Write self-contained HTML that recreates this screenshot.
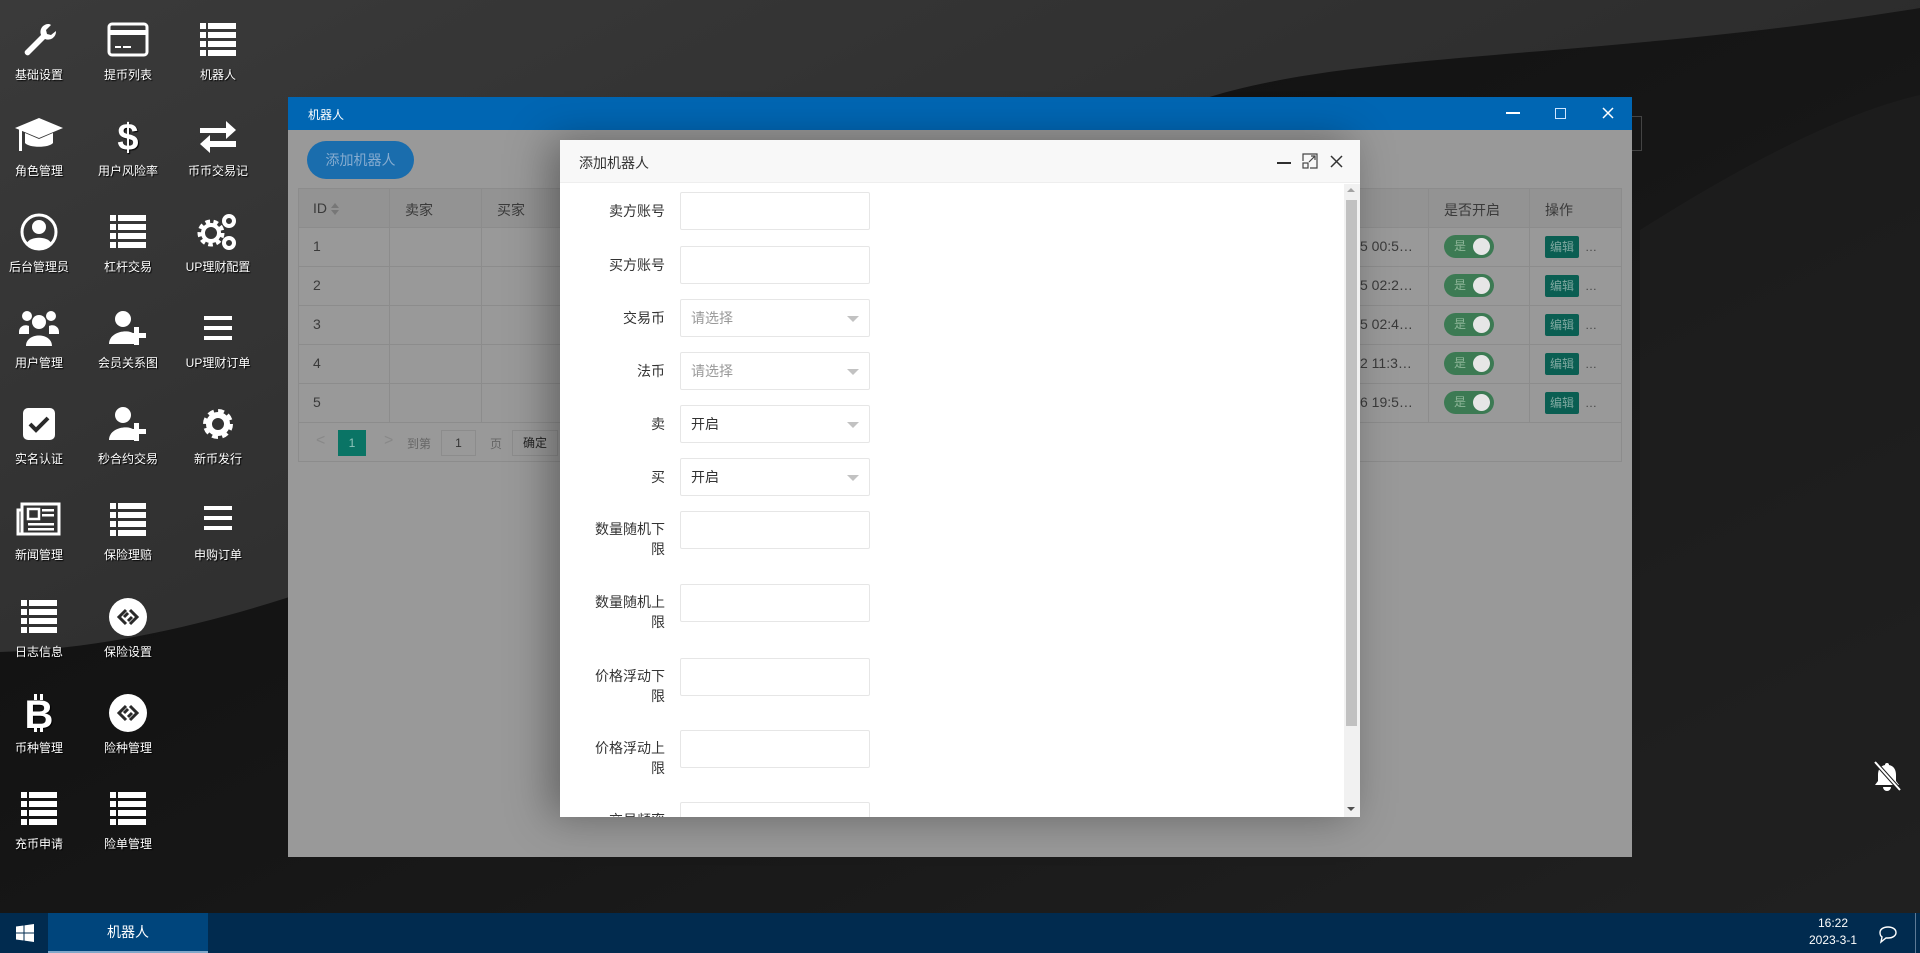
<!DOCTYPE html>
<html><head><meta charset="utf-8">
<style>
*{margin:0;padding:0;box-sizing:border-box}
html,body{width:1920px;height:953px;overflow:hidden}
body{position:relative;font-family:"Liberation Sans","Noto Sans CJK SC",sans-serif;background:#1c1c1c}
.abs{position:absolute}
.di{position:absolute;width:90px;height:70px;text-align:center;color:#fff;font-size:12px;text-shadow:1px 1px 1px #000}
.di svg{display:block;margin:0 auto}
.di span{position:absolute;left:-10px;right:-10px;white-space:nowrap;top:46px}
.lbl{position:absolute;left:593px;width:72px;text-align:right;font-size:14px;color:#333;line-height:20px}
.inp{position:absolute;left:680px;width:190px;height:38px;border:1px solid #e6e6e6;border-radius:2px;background:#fff;font-size:14px;line-height:36px;padding-left:10px;color:#333}
.inp.ph{color:#999}
.arr{position:absolute;right:10px;top:16px;width:0;height:0;border-left:6px solid transparent;border-right:6px solid transparent;border-top:6px solid #c2c2c2}
.cell{position:absolute;font-size:14px;color:#3a3a3a}
.tg{position:absolute;left:1444px;width:50px;height:23px;border-radius:12px;background:#3c7a53;color:#8fb79a;font-size:12px;line-height:23px;padding-left:10px}
.tg i{position:absolute;right:4px;top:3px;width:17px;height:17px;border-radius:50%;background:#e6e6e6}
.ed{position:absolute;left:1545px;width:34px;height:22px;background:#0a5e52;color:#7fa8a0;font-size:12px;line-height:22px;text-align:center;border-radius:2px}
.dots{position:absolute;left:1585px;font-size:12px;color:#444}
</style></head><body>
<svg class="abs" style="left:0;top:0" width="1920" height="953">
<defs>
<linearGradient id="g1" x1="0" y1="0" x2="1" y2="1"><stop offset="0" stop-color="#3a3a3a"/><stop offset="0.6" stop-color="#2a2a2a"/><stop offset="1" stop-color="#242424"/></linearGradient>
<linearGradient id="g2" x1="0" y1="0" x2="1" y2="1"><stop offset="0" stop-color="#0c0c0c"/><stop offset="0.5" stop-color="#161616"/><stop offset="1" stop-color="#222"/></linearGradient>
</defs>
<rect width="1920" height="953" fill="url(#g1)"/>
<path d="M0 652 C400 640 900 300 1200 100 C1350 50 1600 60 1920 8 L1920 953 L0 953Z" fill="url(#g2)"/>
<path d="M1640 230 C1750 160 1850 110 1920 95 L1920 953 L1640 953Z" fill="#1f1f1f" opacity="0.6"/>
</svg>

<!-- desktop icons -->
<div class="di" style="left:-6px;top:20px"><svg width="40" height="40" viewBox="0 0 40 40"><path d="M30 4a8 8 0 0 0-8 11L6 31a3 3 0 0 0 4 4l16-16a8 8 0 0 0 11-8l-5 4-4-1-1-4 5-5a8 8 0 0 0-2-1z" fill="#fff"/></svg><span>基础设置</span></div>
<div class="di" style="left:83px;top:20px"><svg width="42" height="40" viewBox="0 0 42 40"><rect x="2" y="4" width="38" height="31" rx="3" fill="none" stroke="#fff" stroke-width="3"/><rect x="2" y="10" width="38" height="5" fill="#fff"/><rect x="8" y="26" width="6" height="2" fill="#fff"/><rect x="16" y="26" width="8" height="2" fill="#fff"/></svg><span>提币列表</span></div>
<div class="di" style="left:173px;top:20px"><svg width="40" height="40" viewBox="0 0 40 40"><g fill="#fff"><rect x="2" y="3" width="6" height="6"/><rect x="10" y="3" width="28" height="6"/><rect x="2" y="12" width="6" height="6"/><rect x="10" y="12" width="28" height="6"/><rect x="2" y="21" width="6" height="6"/><rect x="10" y="21" width="28" height="6"/><rect x="2" y="30" width="6" height="6"/><rect x="10" y="30" width="28" height="6"/></g></svg><span>机器人</span></div>

<div class="di" style="left:-6px;top:116px"><svg width="50" height="40" viewBox="0 0 50 40"><path d="M25 2 L49 12 L25 22 L1 12Z" fill="#fff"/><path d="M11 17v10c4 5 24 5 28 0V17l-14 6z" fill="#fff"/><rect x="5" y="13" width="3" height="22" fill="#fff"/></svg><span>角色管理</span></div>
<div class="di" style="left:83px;top:116px"><svg width="40" height="40" viewBox="0 0 40 40"><text x="20" y="34" text-anchor="middle" font-size="38" font-weight="bold" fill="#fff" font-family="Liberation Sans">$</text></svg><span>用户风险率</span></div>
<div class="di" style="left:173px;top:116px"><svg width="40" height="40" viewBox="0 0 40 40"><path d="M2 12h26V5l10 9-10 9v-6H2z M38 25H12v-6L2 28l10 9v-6h26z" fill="#fff"/></svg><span>币币交易记</span></div>

<div class="di" style="left:-6px;top:212px"><svg width="40" height="40" viewBox="0 0 40 40"><circle cx="20" cy="20" r="17" fill="none" stroke="#fff" stroke-width="3"/><circle cx="20" cy="15" r="7" fill="#fff"/><path d="M8 31c3-7 21-7 24 0a17 17 0 0 1-24 0z" fill="#fff"/></svg><span>后台管理员</span></div>
<div class="di" style="left:83px;top:212px"><svg width="40" height="40" viewBox="0 0 40 40"><g fill="#fff"><rect x="2" y="3" width="6" height="6"/><rect x="10" y="3" width="28" height="6"/><rect x="2" y="12" width="6" height="6"/><rect x="10" y="12" width="28" height="6"/><rect x="2" y="21" width="6" height="6"/><rect x="10" y="21" width="28" height="6"/><rect x="2" y="30" width="6" height="6"/><rect x="10" y="30" width="28" height="6"/></g></svg><span>杠杆交易</span></div>
<div class="di" style="left:173px;top:212px"><svg width="44" height="40" viewBox="0 0 44 40"><circle cx="15" cy="21" r="10" fill="none" stroke="#fff" stroke-width="7" stroke-dasharray="4 3"/><circle cx="15" cy="21" r="8" fill="none" stroke="#fff" stroke-width="4"/><circle cx="33" cy="9" r="5" fill="none" stroke="#fff" stroke-width="4"/><circle cx="33" cy="31" r="5" fill="none" stroke="#fff" stroke-width="4"/></svg><span>UP理财配置</span></div>

<div class="di" style="left:-6px;top:308px"><svg width="44" height="40" viewBox="0 0 44 40"><g fill="#fff"><circle cx="10" cy="8" r="5"/><circle cx="34" cy="8" r="5"/><circle cx="22" cy="14" r="7"/><path d="M2 24c0-6 6-8 10-6v8H2z M42 24c0-6-6-8-10-6v8h10z M9 38c0-14 26-14 26 0z"/></g></svg><span>用户管理</span></div>
<div class="di" style="left:83px;top:308px"><svg width="44" height="40" viewBox="0 0 44 40"><g fill="#fff"><circle cx="17" cy="11" r="8"/><path d="M3 36c0-14 24-16 26-8v8z"/><rect x="28" y="19" width="5" height="18"/><rect x="21" y="25" width="19" height="5"/></g></svg><span>会员关系图</span></div>
<div class="di" style="left:173px;top:308px"><svg width="40" height="40" viewBox="0 0 40 40"><g fill="#fff"><rect x="6" y="8" width="28" height="4"/><rect x="6" y="18" width="28" height="4"/><rect x="6" y="28" width="28" height="4"/></g></svg><span>UP理财订单</span></div>

<div class="di" style="left:-6px;top:404px"><svg width="40" height="40" viewBox="0 0 40 40"><rect x="4" y="4" width="32" height="32" rx="5" fill="#fff"/><path d="M11 20l6 6 12-12" fill="none" stroke="#2a2a2a" stroke-width="4"/></svg><span>实名认证</span></div>
<div class="di" style="left:83px;top:404px"><svg width="44" height="40" viewBox="0 0 44 40"><g fill="#fff"><circle cx="17" cy="11" r="8"/><path d="M3 36c0-14 24-16 26-8v8z"/><rect x="28" y="19" width="5" height="18"/><rect x="21" y="25" width="19" height="5"/></g></svg><span>秒合约交易</span></div>
<div class="di" style="left:173px;top:404px"><svg width="40" height="40" viewBox="0 0 40 40"><circle cx="20" cy="20" r="11" fill="none" stroke="#fff" stroke-width="8" stroke-dasharray="5 3.6"/><circle cx="20" cy="20" r="9" fill="none" stroke="#fff" stroke-width="6"/></svg><span>新币发行</span></div>

<div class="di" style="left:-6px;top:500px"><svg width="46" height="40" viewBox="0 0 46 40"><rect x="6" y="4" width="37" height="30" fill="none" stroke="#fff" stroke-width="3"/><path d="M6 10H2v24h4" fill="none" stroke="#fff" stroke-width="3"/><rect x="12" y="9" width="11" height="10" fill="none" stroke="#fff" stroke-width="2.5"/><g fill="#fff"><rect x="26" y="9" width="12" height="2.5"/><rect x="26" y="14" width="12" height="2.5"/><rect x="12" y="23" width="26" height="2.5"/><rect x="12" y="28" width="26" height="2.5"/></g></svg><span>新闻管理</span></div>
<div class="di" style="left:83px;top:500px"><svg width="40" height="40" viewBox="0 0 40 40"><g fill="#fff"><rect x="2" y="3" width="6" height="6"/><rect x="10" y="3" width="28" height="6"/><rect x="2" y="12" width="6" height="6"/><rect x="10" y="12" width="28" height="6"/><rect x="2" y="21" width="6" height="6"/><rect x="10" y="21" width="28" height="6"/><rect x="2" y="30" width="6" height="6"/><rect x="10" y="30" width="28" height="6"/></g></svg><span>保险理赔</span></div>
<div class="di" style="left:173px;top:500px"><svg width="40" height="40" viewBox="0 0 40 40"><g fill="#fff"><rect x="6" y="6" width="28" height="4"/><rect x="6" y="16" width="28" height="4"/><rect x="6" y="26" width="28" height="4"/></g></svg><span>申购订单</span></div>

<div class="di" style="left:-6px;top:597px"><svg width="40" height="40" viewBox="0 0 40 40"><g fill="#fff"><rect x="2" y="3" width="6" height="6"/><rect x="10" y="3" width="28" height="6"/><rect x="2" y="12" width="6" height="6"/><rect x="10" y="12" width="28" height="6"/><rect x="2" y="21" width="6" height="6"/><rect x="10" y="21" width="28" height="6"/><rect x="2" y="30" width="6" height="6"/><rect x="10" y="30" width="28" height="6"/></g></svg><span>日志信息</span></div>
<div class="di" style="left:83px;top:597px"><svg width="40" height="40" viewBox="0 0 40 40"><circle cx="20" cy="20" r="19" fill="#fff"/><path d="M18 13l-7 7 7 7 M22 13l7 7-7 7 M16 20l4-4 M24 20l-4 4" fill="none" stroke="#2a2a2a" stroke-width="3"/></svg><span>保险设置</span></div>

<div class="di" style="left:-6px;top:693px"><svg width="40" height="40" viewBox="0 0 40 40"><text x="20" y="35" text-anchor="middle" font-size="40" font-weight="bold" fill="#fff" font-family="Liberation Sans">B</text><g fill="#fff"><rect x="15" y="1" width="3" height="6"/><rect x="21" y="1" width="3" height="6"/><rect x="15" y="33" width="3" height="6"/><rect x="21" y="33" width="3" height="6"/></g></svg><span>币种管理</span></div>
<div class="di" style="left:83px;top:693px"><svg width="40" height="40" viewBox="0 0 40 40"><circle cx="20" cy="20" r="19" fill="#fff"/><path d="M18 13l-7 7 7 7 M22 13l7 7-7 7 M16 20l4-4 M24 20l-4 4" fill="none" stroke="#2a2a2a" stroke-width="3"/></svg><span>险种管理</span></div>

<div class="di" style="left:-6px;top:789px"><svg width="40" height="40" viewBox="0 0 40 40"><g fill="#fff"><rect x="2" y="3" width="6" height="6"/><rect x="10" y="3" width="28" height="6"/><rect x="2" y="12" width="6" height="6"/><rect x="10" y="12" width="28" height="6"/><rect x="2" y="21" width="6" height="6"/><rect x="10" y="21" width="28" height="6"/><rect x="2" y="30" width="6" height="6"/><rect x="10" y="30" width="28" height="6"/></g></svg><span>充币申请</span></div>
<div class="di" style="left:83px;top:789px"><svg width="40" height="40" viewBox="0 0 40 40"><g fill="#fff"><rect x="2" y="3" width="6" height="6"/><rect x="10" y="3" width="28" height="6"/><rect x="2" y="12" width="6" height="6"/><rect x="10" y="12" width="28" height="6"/><rect x="2" y="21" width="6" height="6"/><rect x="10" y="21" width="28" height="6"/><rect x="2" y="30" width="6" height="6"/><rect x="10" y="30" width="28" height="6"/></g></svg><span>险单管理</span></div>

<!-- bell slash -->
<svg class="abs" style="left:1872px;top:760px" width="30" height="32" viewBox="0 0 30 32"><path d="M15 3a2 2 0 0 1 2 2c5 1 7 5 7 10v6l3 4H3l3-4v-6c0-5 2-9 7-10a2 2 0 0 1 2-2z M11 27a4 4 0 0 0 8 0z" fill="#fff"/><path d="M3 2L28 30" stroke="#1e1e1e" stroke-width="4"/><path d="M3 2L28 30" stroke="#fff" stroke-width="2"/></svg>

<div class="abs" style="left:1630px;top:116px;width:12px;height:35px;border:1px solid #444;border-left:none"></div>

<!-- window -->
<div class="abs" style="left:288px;top:97px;width:1344px;height:760px;background:#999;overflow:hidden">
  <div class="abs" style="left:0;top:0;width:1344px;height:33px;background:#0066b3"></div>
  <div class="abs" style="left:20px;top:9px;color:#fff;font-size:12px">机器人</div>
  <div class="abs" style="left:1218px;top:15px;width:14px;height:2px;background:#fff"></div>
  <div class="abs" style="left:1267px;top:11px;width:11px;height:11px;border:1.5px solid #cfe6ff"></div>
  <svg class="abs" style="left:1314px;top:10px" width="12" height="12"><path d="M1 1L11 11M11 1L1 11" stroke="#fff" stroke-width="1.5"/></svg>
</div>
<div class="abs" style="left:307px;top:141px;width:107px;height:38px;border-radius:19px;background:#1a6dad;color:#86acd0;font-size:14px;line-height:38px;text-align:center">添加机器人</div>
<!-- table -->
<div class="abs" style="left:298px;top:188px;width:1324px;height:274px;border:1px solid #8c8c8c"></div>
<div class="abs" style="left:299px;top:189px;width:1322px;height:38px;background:#939393"></div>
<div class="abs" style="left:298px;top:227px;width:1324px;height:1px;background:#8c8c8c"></div>
<div class="abs" style="left:298px;top:266px;width:1324px;height:1px;background:#8c8c8c"></div>
<div class="abs" style="left:298px;top:305px;width:1324px;height:1px;background:#8c8c8c"></div>
<div class="abs" style="left:298px;top:344px;width:1324px;height:1px;background:#8c8c8c"></div>
<div class="abs" style="left:298px;top:383px;width:1324px;height:1px;background:#8c8c8c"></div>
<div class="abs" style="left:298px;top:422px;width:1324px;height:1px;background:#8c8c8c"></div>
<div class="abs" style="left:389px;top:188px;width:1px;height:234px;background:#8c8c8c"></div>
<div class="abs" style="left:481px;top:188px;width:1px;height:234px;background:#8c8c8c"></div>
<div class="abs" style="left:1428px;top:188px;width:1px;height:234px;background:#8c8c8c"></div>
<div class="abs" style="left:1529px;top:188px;width:1px;height:234px;background:#8c8c8c"></div>
<div class="cell" style="left:313px;top:200px">ID</div>
<div class="abs" style="left:331px;top:203px;width:0;height:0;border-left:4px solid transparent;border-right:4px solid transparent;border-bottom:5px solid #777"></div>
<div class="abs" style="left:331px;top:210px;width:0;height:0;border-left:4px solid transparent;border-right:4px solid transparent;border-top:5px solid #777"></div>
<div class="cell" style="left:405px;top:200px">卖家</div>
<div class="cell" style="left:497px;top:200px">买家</div>
<div class="cell" style="left:1444px;top:200px">是否开启</div>
<div class="cell" style="left:1545px;top:200px">操作</div>
<div class="cell" style="left:313px;top:238px">1</div>
<div class="cell" style="left:313px;top:277px">2</div>
<div class="cell" style="left:313px;top:316px">3</div>
<div class="cell" style="left:313px;top:355px">4</div>
<div class="cell" style="left:313px;top:394px">5</div>
<div class="cell" style="left:1360px;top:238px">5 00:5…</div>
<div class="cell" style="left:1360px;top:277px">5 02:2…</div>
<div class="cell" style="left:1360px;top:316px">5 02:4…</div>
<div class="cell" style="left:1360px;top:355px">2 11:3…</div>
<div class="cell" style="left:1360px;top:394px">6 19:5…</div>
<div class="tg" style="top:235px">是<i></i></div>
<div class="tg" style="top:274px">是<i></i></div>
<div class="tg" style="top:313px">是<i></i></div>
<div class="tg" style="top:352px">是<i></i></div>
<div class="tg" style="top:391px">是<i></i></div>
<div class="ed" style="top:236px">编辑</div><div class="dots" style="top:240px">…</div>
<div class="ed" style="top:275px">编辑</div><div class="dots" style="top:279px">…</div>
<div class="ed" style="top:314px">编辑</div><div class="dots" style="top:318px">…</div>
<div class="ed" style="top:353px">编辑</div><div class="dots" style="top:357px">…</div>
<div class="ed" style="top:392px">编辑</div><div class="dots" style="top:396px">…</div>
<div class="cell" style="left:316px;top:432px;color:#888;font-size:16px">&lt;</div>
<div class="abs" style="left:338px;top:430px;width:28px;height:26px;background:#0a7465;color:#8fc4bb;font-size:12px;line-height:26px;text-align:center">1</div>
<div class="cell" style="left:384px;top:432px;color:#888;font-size:16px">&gt;</div>
<div class="cell" style="left:407px;top:435px;font-size:12px;color:#666">到第</div>
<div class="abs" style="left:441px;top:430px;width:35px;height:26px;border:1px solid #8c8c8c;font-size:12px;line-height:24px;text-align:center;color:#333">1</div>
<div class="cell" style="left:490px;top:435px;font-size:12px;color:#666">页</div>
<div class="abs" style="left:512px;top:430px;width:46px;height:26px;border:1px solid #8c8c8c;font-size:12px;line-height:24px;text-align:center;color:#222">确定</div>

<!-- modal -->
<div class="abs" style="left:560px;top:140px;width:800px;height:677px;background:#fff;box-shadow:-10px 0 40px rgba(0,0,0,.35);overflow:hidden">
  <div class="abs" style="left:0;top:0;width:800px;height:43px;background:#f8f8f8;border-bottom:1px solid #eee"></div>
  <div class="abs" style="left:19px;top:13px;font-size:14px;color:#333">添加机器人</div>
  <div class="abs" style="left:717px;top:22px;width:14px;height:2px;background:#2e2e2e"></div>
  <svg class="abs" style="left:742px;top:13px" width="16" height="16" viewBox="0 0 16 16"><path d="M1 8V1h14v14H8" fill="none" stroke="#444" stroke-width="1.2"/><rect x="1" y="10" width="5" height="5" fill="none" stroke="#444" stroke-width="1.2"/><path d="M7 9l6-6M9 3h4v4" fill="none" stroke="#444" stroke-width="1.2"/></svg>
  <svg class="abs" style="left:770px;top:15px" width="13" height="13"><path d="M1 1L12 12M12 1L1 12" stroke="#333" stroke-width="1.5"/></svg>
  <div class="abs" style="left:784px;top:44px;width:16px;height:633px;background:#f1f1f1"></div>
  <div class="abs" style="left:786px;top:60px;width:11px;height:526px;background:#c1c1c1"></div>
  <div class="abs" style="left:787px;top:48px;width:0;height:0;border-left:4px solid transparent;border-right:4px solid transparent;border-bottom:4px solid #a3a3a3"></div>
  <div class="abs" style="left:787px;top:667px;width:0;height:0;border-left:4px solid transparent;border-right:4px solid transparent;border-top:4px solid #505050"></div>
</div>
<div class="lbl" style="top:201px">卖方账号</div><div class="inp" style="top:192px"></div>
<div class="lbl" style="top:255px">买方账号</div><div class="inp" style="top:246px"></div>
<div class="lbl" style="top:308px">交易币</div><div class="inp ph" style="top:299px">请选择<b class="arr"></b></div>
<div class="lbl" style="top:361px">法币</div><div class="inp ph" style="top:352px">请选择<b class="arr"></b></div>
<div class="lbl" style="top:414px">卖</div><div class="inp" style="top:405px">开启<b class="arr"></b></div>
<div class="lbl" style="top:467px">买</div><div class="inp" style="top:458px">开启<b class="arr"></b></div>
<div class="lbl" style="top:519px">数量随机下限</div><div class="inp" style="top:511px"></div>
<div class="lbl" style="top:592px">数量随机上限</div><div class="inp" style="top:584px"></div>
<div class="lbl" style="top:666px">价格浮动下限</div><div class="inp" style="top:658px"></div>
<div class="lbl" style="top:738px">价格浮动上限</div><div class="inp" style="top:730px"></div>
<div class="abs" style="left:560px;top:790px;width:784px;height:27px;overflow:hidden">
  <div class="lbl" style="left:33px;top:20px">交易频率</div><div class="inp" style="left:120px;top:12px"></div>
</div>

<!-- taskbar -->
<div class="abs" style="left:0;top:913px;width:1920px;height:40px;background:#012b4f"></div>
<div class="abs" style="left:48px;top:913px;width:160px;height:40px;background:#00457c;border-bottom:2px solid #7fa7c9;color:#fff;font-size:14px;line-height:38px;text-align:center">机器人</div>
<svg class="abs" style="left:16px;top:924px" width="18" height="18" viewBox="0 0 18 18"><path d="M0 2.5L7.5 1.5V8.5H0z M8.5 1.4L18 0V8.5H8.5z M0 9.5H7.5V16.5L0 15.5z M8.5 9.5H18V18L8.5 16.6z" fill="#fff"/></svg>
<div class="abs" style="left:1800px;top:915px;width:66px;text-align:center;color:#fff;font-size:12px;line-height:17px;white-space:nowrap">16:22<br>2023-3-1</div>
<svg class="abs" style="left:1878px;top:924px" width="20" height="20" viewBox="0 0 20 20"><path d="M10 3c5 0 8 2.5 8 5.5S15 14 10 14H8l-5 4 1-5C2.5 12 2 10.5 2 8.5 2 5.5 5 3 10 3z" fill="none" stroke="#fff" stroke-width="1.4"/></svg>
<div class="abs" style="left:1915px;top:913px;width:1px;height:40px;background:#5d7a96"></div>
</body></html>
